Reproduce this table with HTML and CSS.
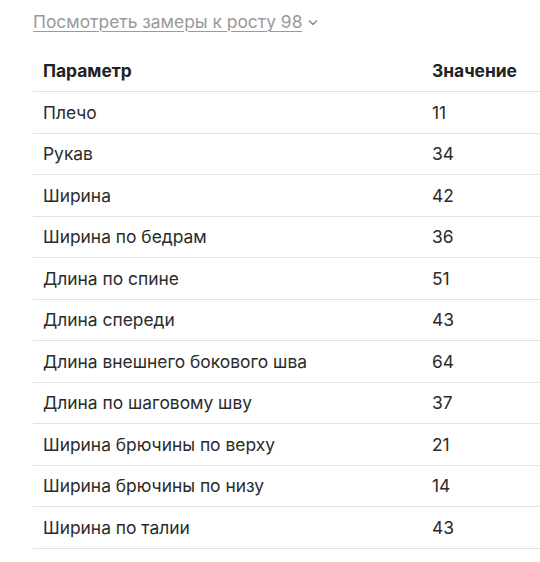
FILE: index.html
```html
<!DOCTYPE html>
<html lang="ru">
<head>
<meta charset="utf-8">
<link rel="stylesheet" href="styles.css">
</head>
<body>
<div class="wrap">
  <div class="toggle-row"><a class="toggle" href="#">Посмотреть замеры к росту 98</a><svg class="chev" width="10" height="8" viewBox="0 0 10 8"><path d="M1.5 2 L5 5.5 L8.5 2" fill="none" stroke="#8a8a8a" stroke-width="1.5" stroke-linecap="round" stroke-linejoin="round"/></svg></div>
  <table class="sizes">
    <thead>
      <tr><th>Параметр</th><th class="val">Значение</th></tr>
    </thead>
    <tbody>
      <tr><td>Плечо</td><td class="val">11</td></tr>
      <tr><td>Рукав</td><td class="val">34</td></tr>
      <tr><td>Ширина</td><td class="val">42</td></tr>
      <tr><td>Ширина по бедрам</td><td class="val">36</td></tr>
      <tr><td>Длина по спине</td><td class="val">51</td></tr>
      <tr><td>Длина спереди</td><td class="val">43</td></tr>
      <tr><td>Длина внешнего бокового шва</td><td class="val">64</td></tr>
      <tr><td>Длина по шаговому шву</td><td class="val">37</td></tr>
      <tr><td>Ширина брючины по верху</td><td class="val">21</td></tr>
      <tr><td>Ширина брючины по низу</td><td class="val">14</td></tr>
      <tr><td>Ширина по талии</td><td class="val">43</td></tr>
    </tbody>
  </table>
</div>
</body>
</html>
```
FILE: styles.css
```css
html, body {
  margin: 0;
  padding: 0;
  background: #fff;
}
body {
  font-family: Inter, "Noto Sans", sans-serif;
  color: #2b2b2b;
}
.wrap {
  padding: 10px 0 0 33px;
}
.toggle-row {
  display: flex;
  align-items: center;
  height: 24px;
}
.toggle {
  font-size: 17.4px;
  line-height: 24px;
  color: #9a9a9a;
  text-decoration: underline;
  text-decoration-thickness: 1px;
  text-underline-offset: 3px;
}
.chev {
  margin-left: 6px;
  margin-top: 2px;
}
.sizes {
  margin-top: 16px;
  width: 507px;
  border-collapse: collapse;
  font-size: 17.4px;
}
.sizes th, .sizes td {
  text-align: left;
  padding: 0 10px;
  height: 41.5px;
  border-bottom: 1px solid #e2e2e2;
  box-sizing: border-box;
}
.sizes th {
  font-weight: 700;
  color: #222;
}
.sizes .val {
  width: 119px;
  padding-left: 11px;
  padding-right: 0;
}
```
